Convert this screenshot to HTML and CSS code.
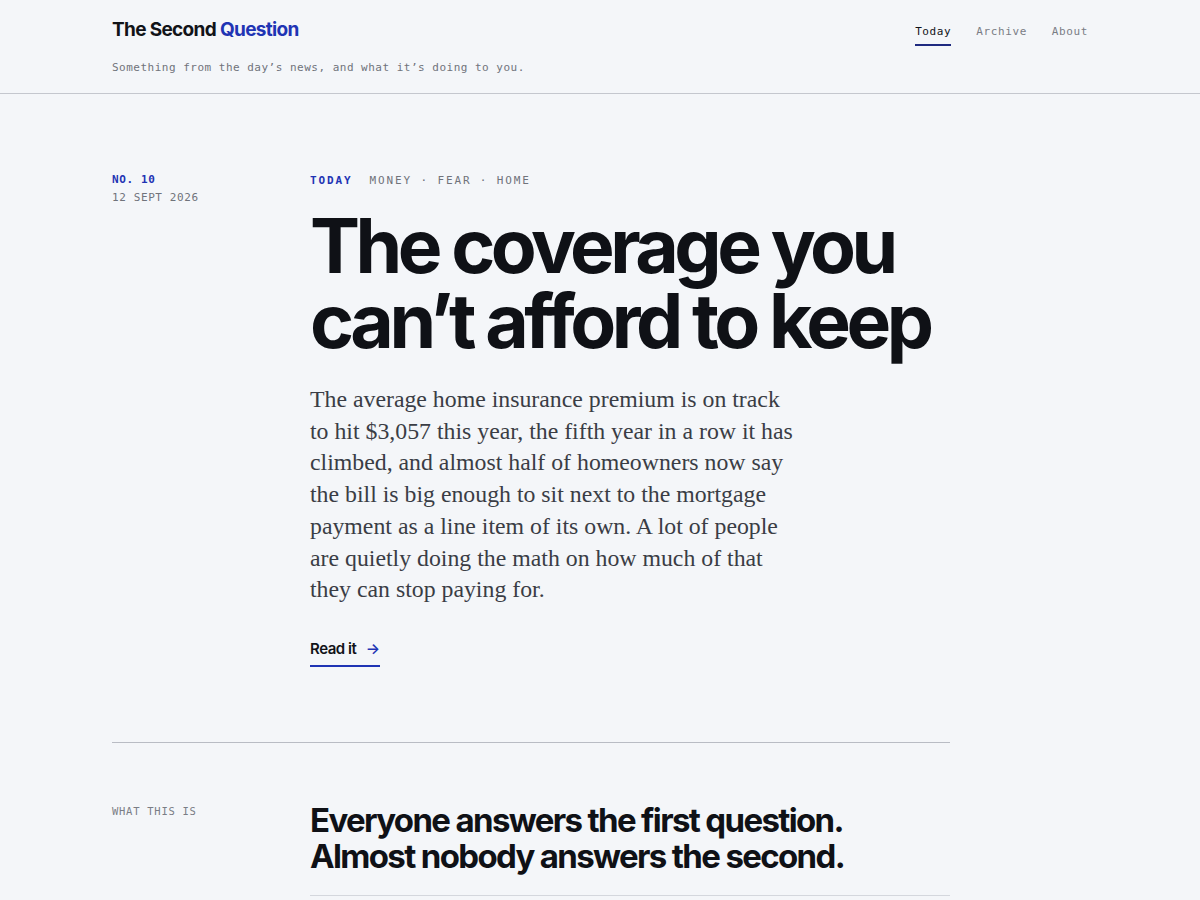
FILE: index.html
```html
<!DOCTYPE html>
<html lang="en">
<head>
<meta charset="utf-8">
<title>The Second Question</title>
<link rel="stylesheet" href="styles.css">
</head>
<body>
<header class="site-header">
  <div class="wrap header-inner">
    <div class="brand">
      <a class="logo" href="#">The Second <span class="logo-accent">Question</span></a>
      <p class="tagline">Something from the day’s news, and what it’s doing to you.</p>
    </div>
    <nav class="nav">
      <a class="nav-link is-active" href="#">Today</a>
      <a class="nav-link" href="#">Archive</a>
      <a class="nav-link" href="#">About</a>
    </nav>
  </div>
</header>
<main class="wrap">
  <article class="hero">
    <aside class="issue">
      <div class="issue-no">NO. 10</div>
      <div class="issue-date">12 SEPT 2026</div>
    </aside>
    <div class="hero-body">
      <div class="kicker"><span class="kicker-today">TODAY</span><span class="kicker-tags">MONEY · FEAR · HOME</span></div>
      <h1 class="headline">The coverage you can’t afford to keep</h1>
      <p class="dek">The average home insurance premium is on track to hit $3,057 this year, the fifth year in a row it has climbed, and almost half of homeowners now say the bill is big enough to sit next to the mortgage payment as a line item of its own. A lot of people are quietly doing the math on how much of that they can stop paying for.</p>
      <a class="read-link" href="#">Read it <span class="arrow">→</span></a>
    </div>
  </article>
  <section class="about">
    <div class="about-label">WHAT THIS IS</div>
    <div class="about-body">
      <h2 class="about-title">Everyone answers the first question.<br>Almost nobody answers the second.</h2>
    </div>
  </section>
</main>
</body>
</html>
```
FILE: styles.css
```css
* { box-sizing: border-box; }
html, body { margin: 0; padding: 0; }
body {
  background: #f4f6f9;
  color: #111318;
  font-family: Inter, "Liberation Sans", sans-serif;
}
a { text-decoration: none; color: inherit; }
.wrap { width: 976px; margin: 0 auto; }

.site-header { border-bottom: 1px solid #c4c7ce; }
.header-inner {
  display: flex;
  justify-content: space-between;
  align-items: flex-start;
  padding: 18px 0 16px;
}
.logo {
  font-size: 19px;
  font-weight: 700;
  letter-spacing: -0.035em;
  color: #111318;
  line-height: 24px;
  display: block;
}
.logo-accent { color: #1f34b4; }
.tagline {
  margin: 17px 0 0;
  font-family: "DejaVu Sans Mono", "Liberation Mono", monospace;
  font-size: 11px;
  letter-spacing: 0.045em;
  color: #70737b;
  line-height: 18px;
}
.nav { display: flex; gap: 25px; padding-top: 6px; }
.nav-link {
  font-family: "DejaVu Sans Mono", "Liberation Mono", monospace;
  font-size: 11px;
  letter-spacing: 0.055em;
  color: #7a7d85;
  line-height: 16px;
  padding-bottom: 4px;
  border-bottom: 2px solid transparent;
}
.nav-link.is-active { color: #111318; border-bottom-color: #1f2a80; }

.hero {
  display: grid;
  grid-template-columns: 198px 640px;
  padding: 77px 0 75px;
  border-bottom: 1px solid #b9bcc4;
  width: 838px;
}
.issue { font-family: "DejaVu Sans Mono", "Liberation Mono", monospace; font-size: 11px; letter-spacing: 0.055em; line-height: 18px; }
.issue-no { color: #1f34b4; font-weight: 700; }
.issue-date { color: #70737b; }
.kicker {
  font-family: "DejaVu Sans Mono", "Liberation Mono", monospace;
  font-size: 11px;
  letter-spacing: 0.17em;
  line-height: 18px;
  display: flex;
  gap: 17px;
  padding-top: 1px;
}
.kicker-today { color: #1f34b4; font-weight: 700; }
.kicker-tags { color: #70737b; }
.headline {
  margin: 18px 0 0;
  font-size: 75px;
  line-height: 75px;
  font-weight: 700;
  letter-spacing: -0.06em;
  color: #0f1116;
}
.dek {
  margin: 26px 0 0;
  max-width: 488px;
  font-family: "Liberation Serif", serif;
  font-size: 23.8px;
  line-height: 31.7px;
  color: #3a3d45;
}
.read-link {
  display: inline-block;
  margin-top: 33px;
  font-size: 15px;
  font-weight: 600;
  letter-spacing: -0.03em;
  color: #111318;
  padding-bottom: 7px;
  border-bottom: 2px solid #1f34b4;
}
.arrow { color: #1f34b4; margin-left: 6px; }

.about {
  display: grid;
  grid-template-columns: 198px 640px;
  padding-top: 59px;
}
.about-label {
  font-family: "DejaVu Sans Mono", "Liberation Mono", monospace;
  font-size: 10.5px;
  letter-spacing: 0.07em;
  color: #7a7d85;
  padding-top: 3px;
}
.about-body { border-bottom: 1px solid #d4d7dd; padding-bottom: 21px; }
.about-title {
  margin: 0;
  font-size: 33px;
  line-height: 36px;
  font-weight: 700;
  letter-spacing: -0.05em;
  color: #0f1116;
}
```
